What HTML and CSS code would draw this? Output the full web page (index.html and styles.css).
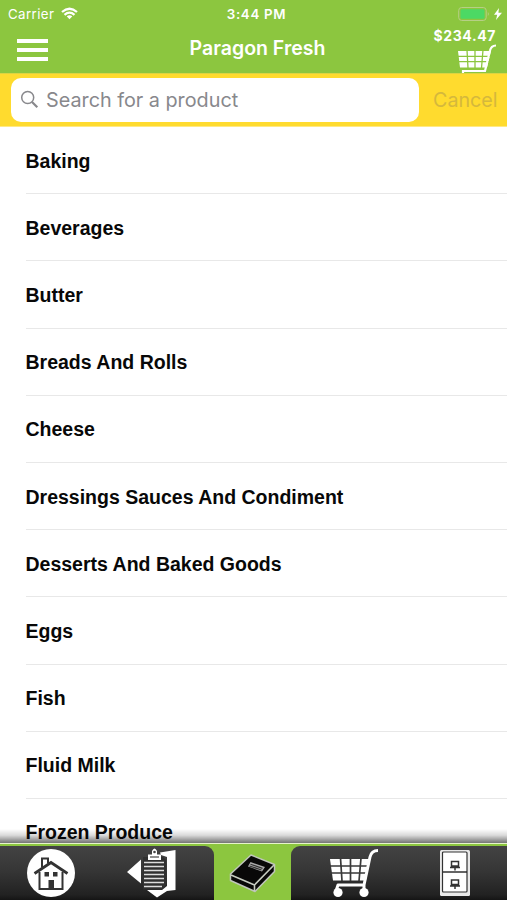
FILE: index.html
```html
<!DOCTYPE html>
<html lang="en">
<head>
<meta charset="utf-8">
<title>Paragon Fresh</title>
<link rel="stylesheet" href="styles.css">
</head>
<body>
<div class="app">
  <header class="header">
    <div class="status">
      <div class="status-left">
        <span class="carrier">Carrier</span>
        <svg class="wifi" viewBox="0 0 17 13" width="17" height="13"><g fill="none" stroke="#fff" stroke-width="2.300"><path d="M1 5Q8.500-1.500 16 5"/><path d="M3.500 7.800Q8.500 3.500 13.500 7.800"/></g><path fill="#fff" d="M5.700 9.300Q8.500 7.200 11.300 9.300L8.500 12.300Z"/></svg>
      </div>
      <span class="time">3:44 PM</span>
      <svg class="battery" viewBox="0 0 45 16" width="45" height="16"><rect x=".7" y="1.500" width="27.500" height="13" rx="3" fill="none" stroke="#b6cf86"/><rect x="2.500" y="3.200" width="24" height="9.600" rx="1.500" fill="#4cd964"/><path d="M29.800 6v4q2-2 0-4" fill="#b6cf86"/><path fill="#fff" d="M41 2L36 8.800h3.200L38 14l6-7.200h-3.600z"/></svg>
    </div>
    <div class="nav">
      <button class="menu" aria-label="Menu"><i></i><i></i><i></i></button>
      <h1 class="title">Paragon Fresh</h1>
      <div class="basket">
        <span class="total">$234.47</span>
        <svg class="basket-icon" viewBox="0 0 40 30" width="40" height="30"><path fill="#fff" d="M2 7h33l-4 16.500H4z"/><path fill="none" stroke="#8cc63f" stroke-width="1.300" d="M0 12.300h36M0 17.600h34M11 6l1 18M19 6v18M27 6l-1.500 18"/><path fill="none" stroke="#fff" stroke-width="2.200" d="M40 1.500q-5 .2-6 5L29 27H7v4"/></svg>
      </div>
    </div>
  </header>
  <div class="search">
    <div class="field">
      <svg viewBox="0 0 20 20" width="20" height="20"><g fill="none" stroke="#88888c"><circle cx="7.700" cy="7.500" r="6" stroke-width="1.500"/><path d="M12 12l5.300 5.300" stroke-width="2.200"/></g></svg>
      <span class="placeholder">Search for a product</span>
    </div>
    <span class="cancel">Cancel</span>
  </div>
  <ul class="list">
    <li><span>Baking</span></li>
    <li><span>Beverages</span></li>
    <li><span>Butter</span></li>
    <li><span>Breads And Rolls</span></li>
    <li><span>Cheese</span></li>
    <li><span>Dressings Sauces And Condiment</span></li>
    <li><span>Desserts And Baked Goods</span></li>
    <li><span>Eggs</span></li>
    <li><span>Fish</span></li>
    <li><span>Fluid Milk</span></li>
    <li><span>Frozen Produce</span></li>
  </ul>
  <nav class="tabs">
    <div class="group left">
      <svg viewBox="0 0 50 50" width="50" height="50"><circle cx="25" cy="25" r="24" fill="#fff"/><g fill="none" stroke="#333" stroke-width="2"><path d="M13.500 24v17h23V24"/><path d="M8.500 25.500L25 14.500l16.500 11" stroke-width="2.800"/><path d="M16 19.500v-9h6v5"/></g><path fill="#333" d="M22.500 32h5.500v9h-5.500zM18.500 24h4.500v4.500h-4.500zM27 24h4.500v4.500H27z"/></svg>
      <svg viewBox="0 0 50 50" width="50" height="50"><path fill="#fff" d="M0 24L14 11.500v24zM33 4.500L48.500 2v40L40 43 30 49.500 20 42h15l5-4V9l-6-2z"/><path fill="#303030" d="M16 9h20l3 3v25l-4 4.500H16z"/><path stroke="#ddd" stroke-width="1.500" d="M17 14.500h20M17 18.500h20M17 22.500h20M17 26.500h20M17 30.500h20M17 34.500h20M17 38.500h18"/><path fill="#fff" d="M21 12V6.500h4V3q2.500-5 5 0v3.500h4V12z"/><path fill="none" stroke="#444" stroke-width="1.200" d="M23 9h9"/><circle cx="27.500" cy="4" r="1.300" fill="#444"/></svg>
    </div>
    <div class="active">
      <svg viewBox="0 0 48 42" width="48" height="42"><g stroke-linejoin="round"><path fill="#080808" stroke="#bfc5ba" stroke-width="1.500" d="M23 2L46.500 11.500v7L27 38.500 2.500 27.500V21z"/><path fill="none" stroke="#c5cbc0" stroke-width="1.600" d="M3 22l23.500 10L46 12M26.500 32v6"/></g><path fill="#aaa" d="M22.500 9L37 14l-3 4.500L20 13.500z"/><path stroke="#333" stroke-width="1.200" d="M22.500 11.200l12 4.200M21.500 13l12 4"/></svg>
    </div>
    <div class="group right">
      <svg viewBox="0 0 50 50" width="50" height="50"><path fill="#fff" d="M1 11h40l-4 21.500H4z"/><path fill="none" stroke="#393939" stroke-width="1.700" d="M0 18h40M0 25h40M11.500 10l1.500 23M21.500 10v23M32 10l-2 23"/><path fill="none" stroke="#fff" stroke-width="3" stroke-linejoin="round" d="M49 2.500q-6.500 0-8 6.500L35 37H9l-2 6M35 37v6"/><circle cx="9" cy="44.500" r="4.600" fill="#fff"/><circle cx="35" cy="44.500" r="4.600" fill="#fff"/></svg>
      <svg class="cabinet" viewBox="0 0 30 46" width="30" height="46"><rect width="30" height="46" rx="1.500" fill="#e9e9e9"/><rect x="2.500" y="2" width="24.500" height="40" rx="1" fill="#fff" stroke="#333" stroke-width="1.200"/><path stroke="#222" stroke-width="1.400" d="M3 22h24"/><g fill="none" stroke="#333" stroke-width="1.500"><path id="handle" d="M11.500 11.500h7v4.500h-7zM10 17.500h10M15 18v2.500"/><use href="#handle" y="18.500"/></g></svg>
    </div>
  </nav>
</div>
</body>
</html>
```
FILE: styles.css
```css
* { box-sizing: border-box; }
body { margin: 0; font-family: "Liberation Sans", Arial, sans-serif; background: #fff; }
.app { position: relative; width: 507px; height: 900px; overflow: hidden; }
.header { height: 73px; background: #8cc63f; color: #fff; }
.status { display: grid; grid-template-columns: 1fr auto 1fr; align-items: center; height: 27px; padding-left: 8px; font-family: Inter, sans-serif; font-size: 13.300px; }
.status-left { display: flex; align-items: center; gap: 7px; }
.carrier { letter-spacing: .4px; }
.time { position: relative; left: -1px; font-weight: 600; letter-spacing: .7px; }
.battery { justify-self: end; margin-right: 4px; }
.nav { display: grid; grid-template-columns: 1fr auto 1fr; height: 46px; }
.menu { display: flex; flex-direction: column; gap: 5px; margin: 12px 0 0 17px; padding: 0; border: 0; background: none; width: 31px; }
.menu i { height: 4px; background: #fff; }
.title { margin: 9px 0 0; padding-left: 8px; font: 600 19.500px/24px Inter, sans-serif; }
.basket { display: flex; flex-direction: column; align-items: flex-end; padding-right: 11px; overflow: hidden; }
.total { margin-top: 1px; font: 700 14px/16px Inter, sans-serif; letter-spacing: .6px; }
.basket-icon { flex: none; }
.search { display: flex; align-items: center; height: 54px; padding-left: 11px; background: #ffdb2e; border-top: 1px solid #dcd342; border-bottom: 1px solid #ffe983; font-family: Inter, sans-serif; }
.field { display: flex; align-items: center; width: 408px; height: 44px; padding-left: 9px; gap: 6px; background: #fff; border-radius: 10px; }
.placeholder { color: #88888c; font-size: 19.800px; }
.cancel { margin-left: 14px; color: #d5b83c; font-size: 19.700px; }
.list { margin: 0; padding: 0 0 0 25.500px; list-style: none; }
.list li { display: flex; align-items: center; height: 67.200px; padding-top: 2px; border-bottom: 1.500px solid #e8e8e8; color: #080808; font-size: 19.500px; font-weight: 700; }
.tabs { position: absolute; left: 0; right: 0; bottom: 0; display: flex; height: 57px; border-top: 1px solid #e6f3cb; background: #8cc63f; }
.tabs::before { content: ""; position: absolute; left: 0; right: 0; top: -15px; height: 14px; background: linear-gradient(rgba(0,0,0,0), rgba(0,0,0,.15) 45%, rgba(0,0,0,.55)); }
.group { display: flex; align-items: flex-start; margin-top: 2px; padding-top: 2px; background: linear-gradient(#434343, #363636 45%, #222 90%, #151515); }
.left { width: 214px; padding-left: 26px; gap: 51px; border-radius: 0 9px 0 0; }
.active { width: 77px; padding: 9px 0 0 14px; }
.right { width: 216px; padding-left: 38px; gap: 61px; border-radius: 9px 0 0 0; }
.cabinet { margin-top: 2px; }
```
